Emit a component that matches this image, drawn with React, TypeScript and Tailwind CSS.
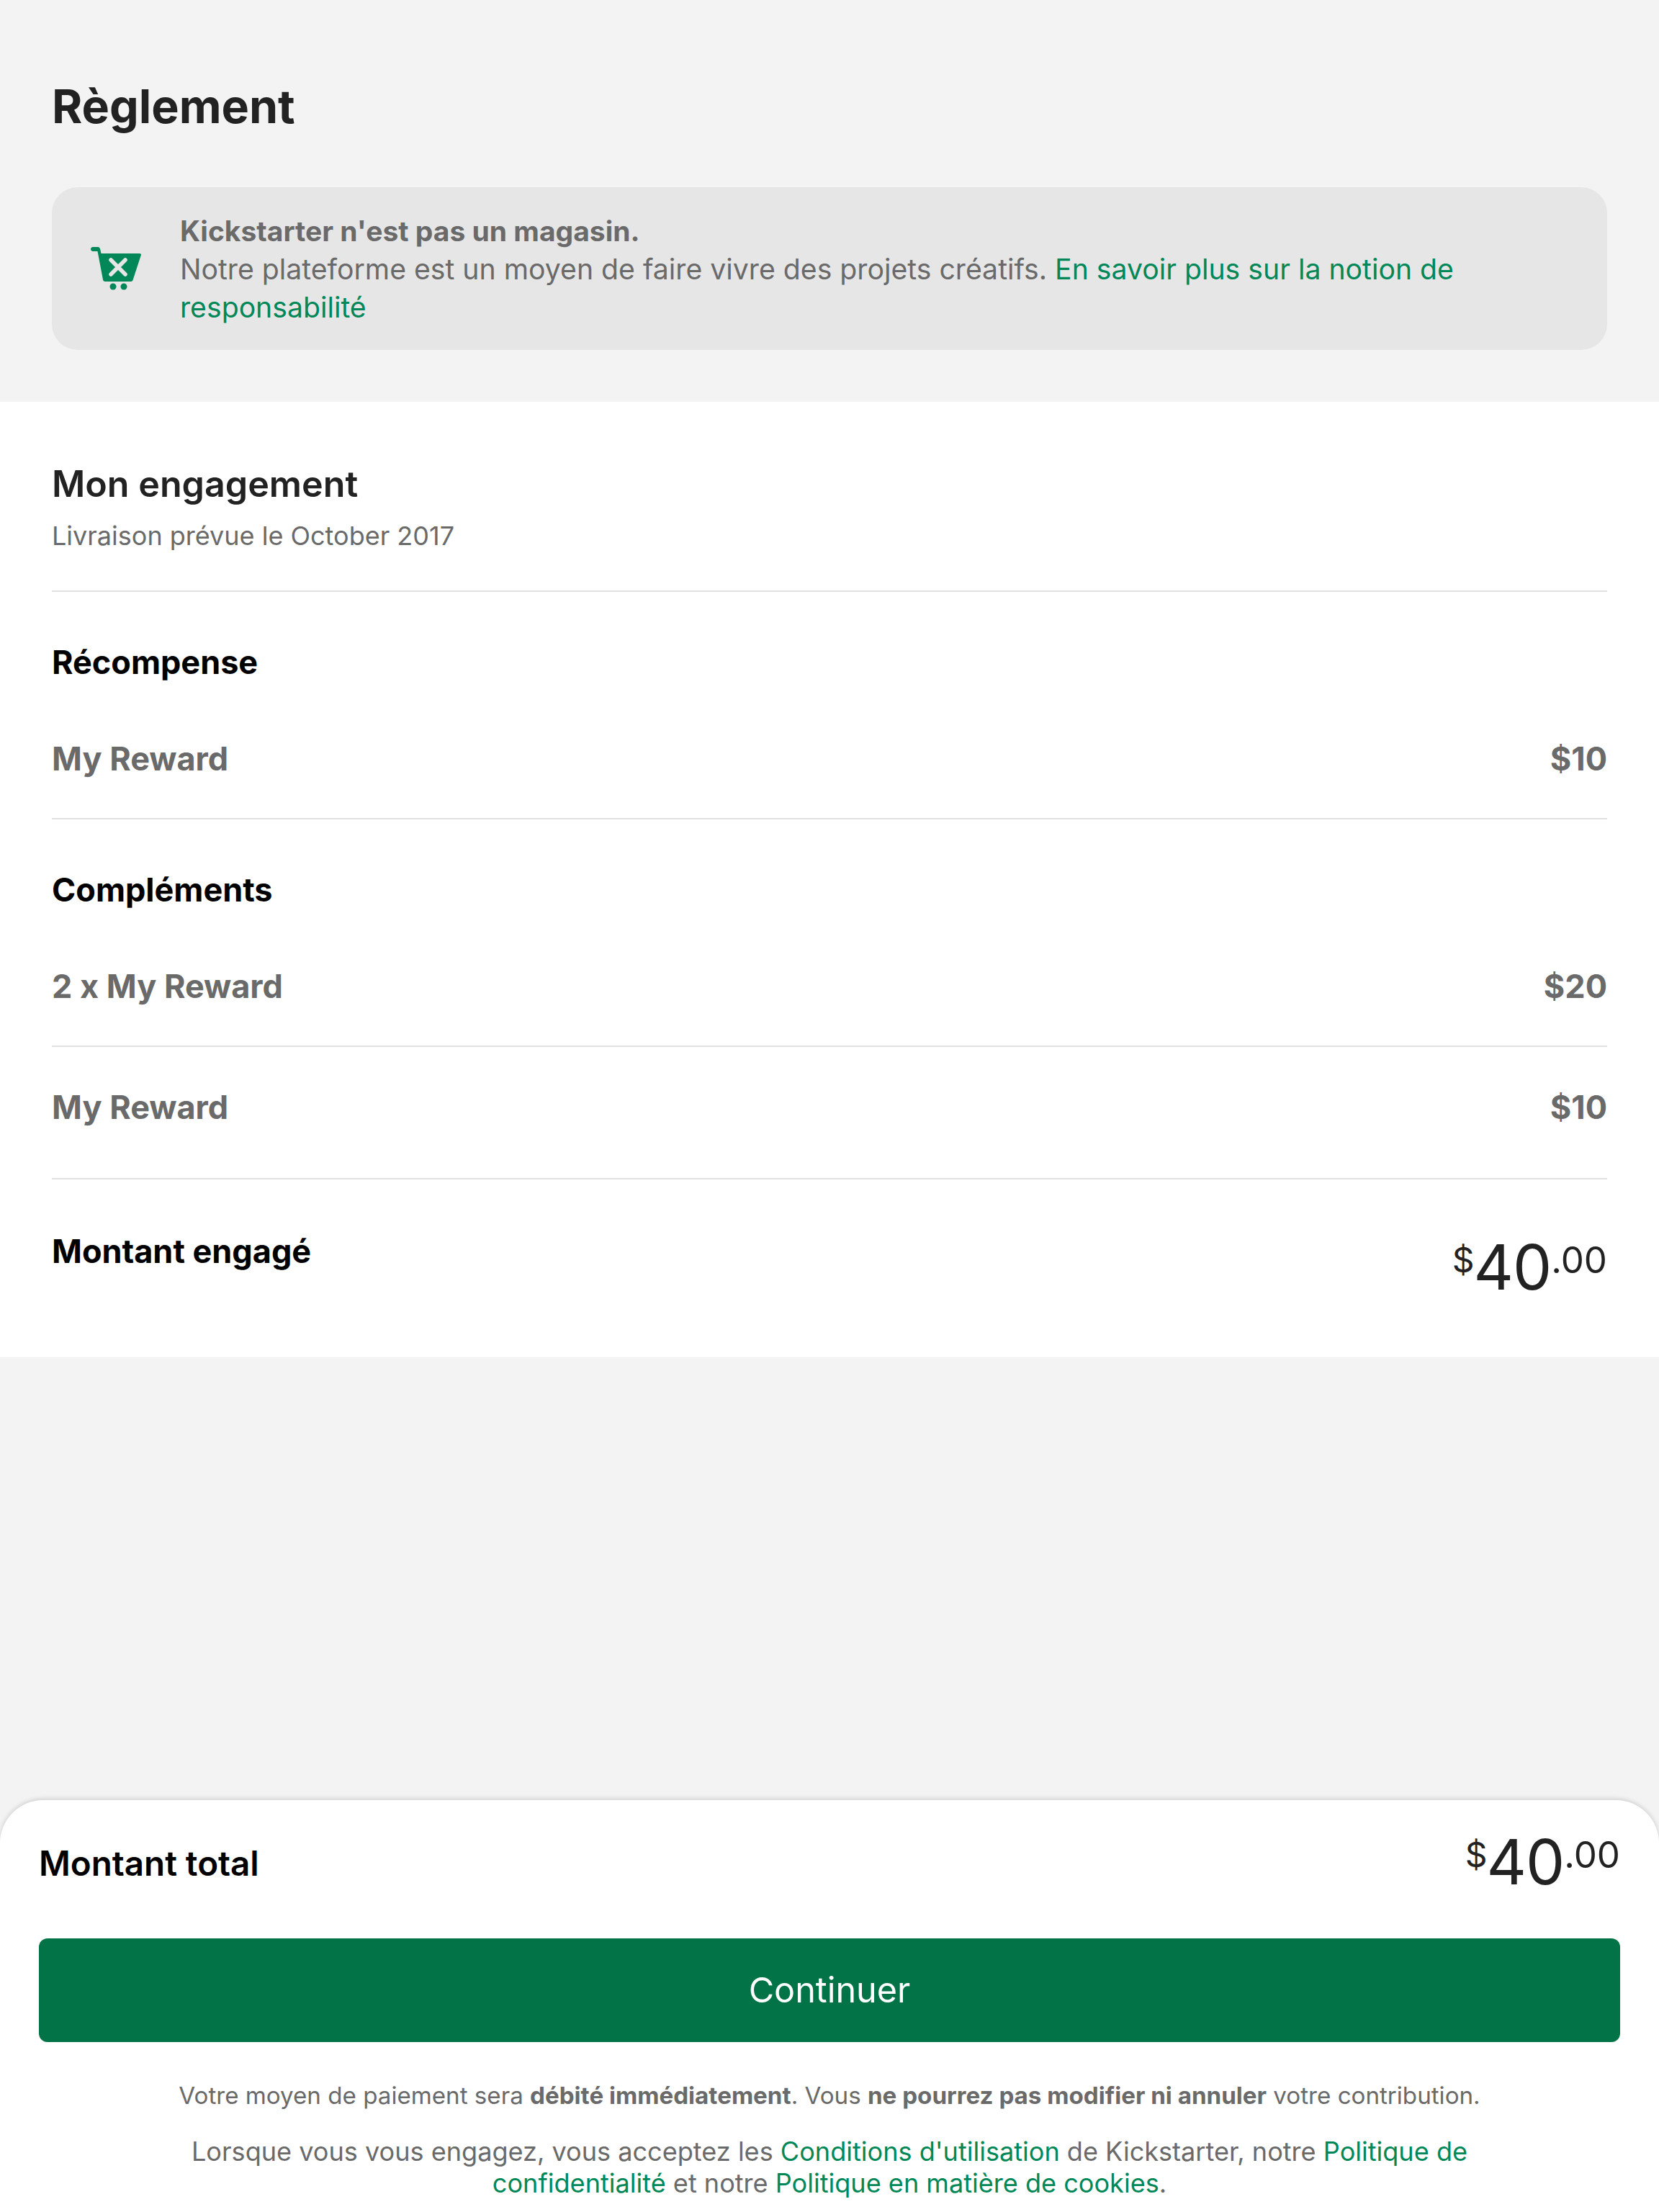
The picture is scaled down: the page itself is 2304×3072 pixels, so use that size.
export default function App() {
  const F = { fontFamily: "Inter, 'Noto Sans', sans-serif" };
  const Price = () => (
    <div className="flex items-start text-[#222222] font-normal">
      <span className="text-[48px] leading-[60px] mt-[4px] tracking-[-1px]">$</span>
      <span className="text-[86px] leading-[88px] tracking-[-1px]">40</span>
      <span className="text-[51px] leading-[60px] mt-[4px]">.00</span>
    </div>
  );
  return (
    <div style={F} className="w-[2304px] h-[3072px] bg-[#f3f3f3] flex flex-col overflow-hidden">
      <div className="px-[72px] pt-[104px] h-[558px]">
        <h1 className="text-[64.5px] leading-[88px] font-bold text-[#222222]">Règlement</h1>
        <div className="mt-[68px] h-[226px] bg-[#e6e6e6] rounded-[36px] flex items-center">
          <div className="w-[178px] flex justify-center shrink-0">
            <svg width="70" height="60" viewBox="0 0 70 60">
              <path d="M3 0h7c1.500 0 2.500 1 3 2.500L14.500 9H68c1.500 0 2.300 1.200 1.800 2.500L58.500 46c-.5 1.300-1.300 2-2.700 2H20c-1.700 0-2.700-1-3-2.500L9.500 6H3C-1 6-1 0 3 0z" fill="#028858" />
              <path d="M28 18l20 20M48 18L28 38" stroke="#e6e6e6" strokeWidth="5.500" strokeLinecap="round" />
              <circle cx="31" cy="55" r="4.500" fill="#028858" />
              <circle cx="46" cy="55" r="4.500" fill="#028858" />
            </svg>
          </div>
          <p className="text-[39.2px] leading-[53px] text-[#6a6a6a] pr-[200px]">
            <b className="font-bold block text-[39px]">Kickstarter n'est pas un magasin.</b>
            Notre plateforme est un moyen de faire vivre des projets créatifs.{" "}
            <span className="text-[#028858]">En savoir plus sur la notion de responsabilité</span>
          </p>
        </div>
      </div>

      <div className="bg-white px-[72px] h-[1327px]">
        <h2 className="pt-[82px] text-[50.2px] leading-[64px] font-semibold text-[#222222]">Mon engagement</h2>
        <p className="mt-[16px] text-[36px] leading-[48px] text-[#6a6a6a]">Livraison prévue le October 2017</p>
        <div className="mt-[52px] border-t-2 border-[#e0e0e0]" />
        <h3 className="mt-[66px] text-[45px] leading-[64px] font-bold text-black">Récompense</h3>
        <Row left="My Reward" right="$10" mt="mt-[70px]" />
        <div className="mt-[50px] border-t-2 border-[#e0e0e0]" />
        <h3 className="mt-[66px] text-[45px] leading-[64px] font-bold text-black">Compléments</h3>
        <Row left="2 x My Reward" right="$20" mt="mt-[70px]" />
        <div className="mt-[50px] border-t-2 border-[#e0e0e0]" />
        <Row left="My Reward" right="$10" mt="mt-[52px]" />
        <div className="mt-[66px] border-t-2 border-[#e0e0e0]" />
        <div className="mt-[68px] flex justify-between items-start">
          <span className="text-[45px] leading-[64px] font-bold text-black">Montant engagé</span>
          <div className="mt-[10px]"><Price /></div>
        </div>
      </div>

      <div className="mt-auto bg-white rounded-t-[60px] shadow-[0_-2px_6px_rgba(0,0,0,0.14)] px-[54px] h-[572px] flex flex-col">
        <div className="pt-[42px] flex justify-between items-start">
          <span className="mt-[14px] text-[47.5px] leading-[64px] font-semibold text-black">Montant total</span>
          <Price />
        </div>
        <button className="mt-[62px] h-[144px] rounded-[12px] bg-[#017347] text-white text-[48.5px] shrink-0">Continuer</button>
        <p className="mt-[52px] text-center text-[33.15px] leading-[44px] text-[#6a6a6a]">
          Votre moyen de paiement sera <b className="font-bold">débité immédiatement</b>. Vous <b className="font-bold">ne pourrez pas modifier ni annuler</b> votre contribution.
        </p>
        <p className="mt-[34px] px-[200px] text-center text-[36.1px] leading-[44px] text-[#6a6a6a]">
          Lorsque vous vous engagez, vous acceptez les <span className="text-[#028858]">Conditions d'utilisation</span> de Kickstarter, notre <span className="text-[#028858]">Politique de confidentialité</span> et notre <span className="text-[#028858]">Politique en matière de cookies</span>.
        </p>
      </div>
    </div>
  );
}

function Row({ left, right, mt }: { left: string; right: string; mt: string }) {
  return (
    <div className={`${mt} flex justify-between text-[45px] leading-[64px] font-bold text-[#6a6a6a]`}>
      <span>{left}</span>
      <span>{right}</span>
    </div>
  );
}
